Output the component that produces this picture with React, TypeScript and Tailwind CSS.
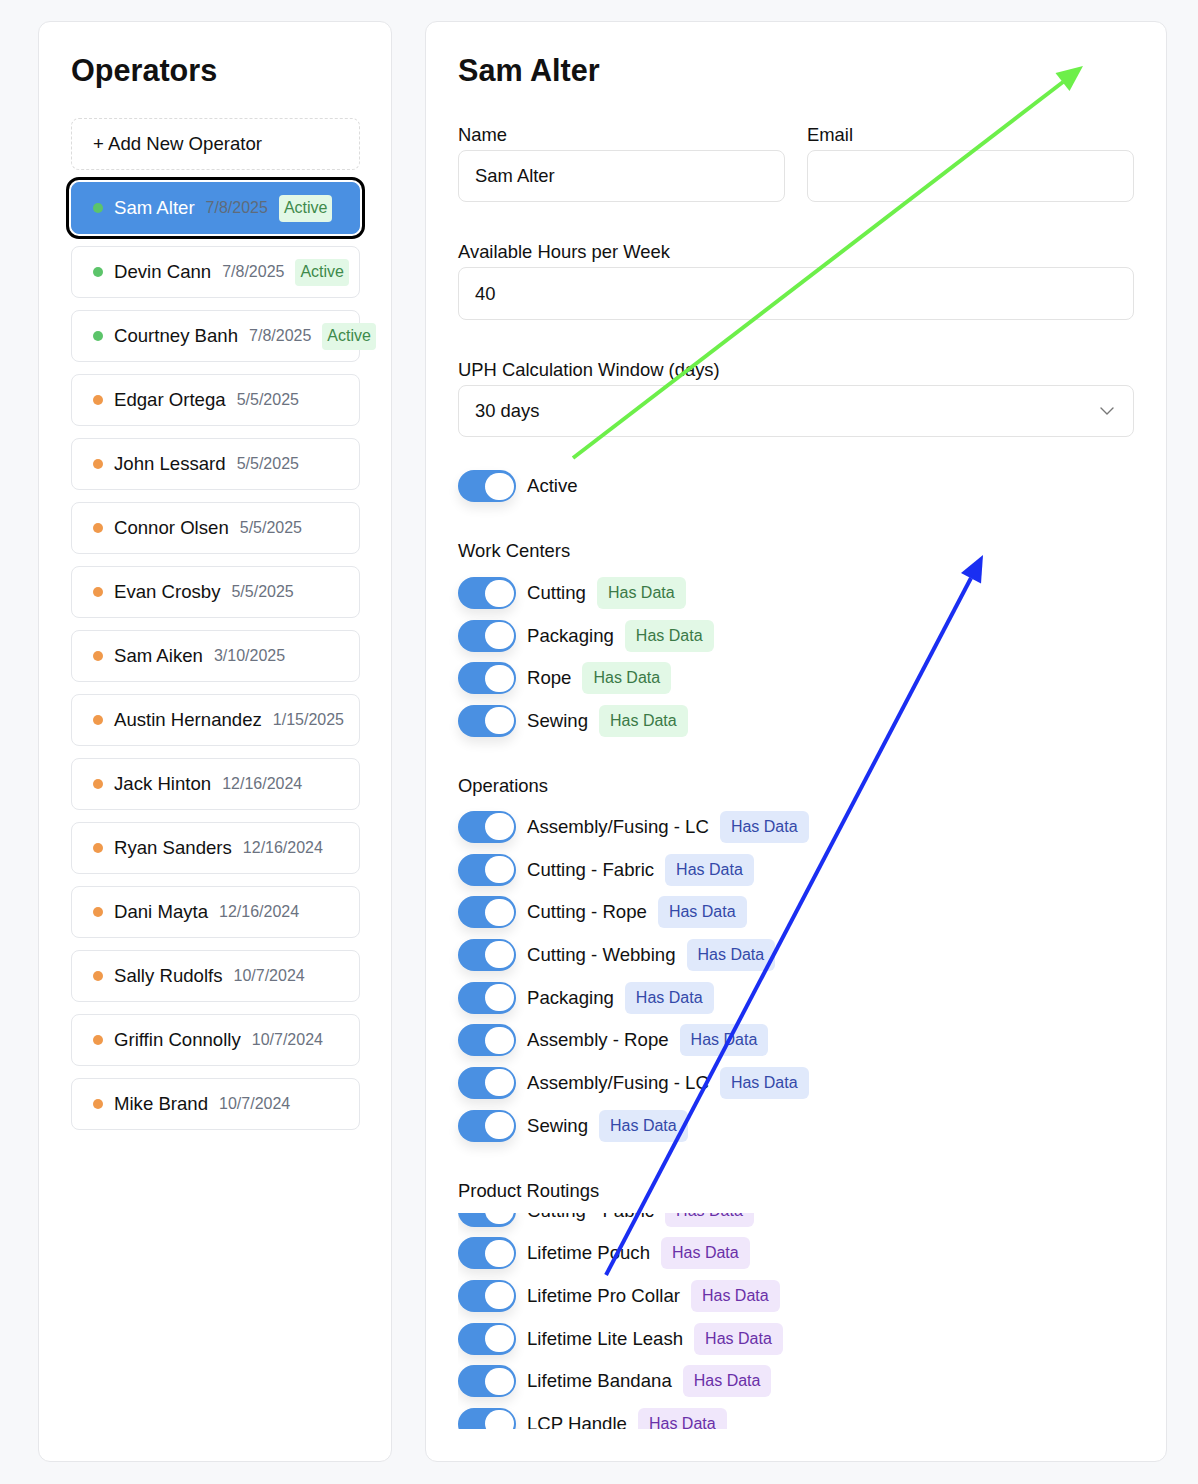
import React from 'react';
import { ChevronDown } from 'lucide-react';

type Operator = { name: string; date: string; active?: boolean };

const OPERATORS: Operator[] = [
  { name: 'Sam Alter', date: '7/8/2025', active: true },
  { name: 'Devin Cann', date: '7/8/2025', active: true },
  { name: 'Courtney Banh', date: '7/8/2025', active: true },
  { name: 'Edgar Ortega', date: '5/5/2025' },
  { name: 'John Lessard', date: '5/5/2025' },
  { name: 'Connor Olsen', date: '5/5/2025' },
  { name: 'Evan Crosby', date: '5/5/2025' },
  { name: 'Sam Aiken', date: '3/10/2025' },
  { name: 'Austin Hernandez', date: '1/15/2025' },
  { name: 'Jack Hinton', date: '12/16/2024' },
  { name: 'Ryan Sanders', date: '12/16/2024' },
  { name: 'Dani Mayta', date: '12/16/2024' },
  { name: 'Sally Rudolfs', date: '10/7/2024' },
  { name: 'Griffin Connolly', date: '10/7/2024' },
  { name: 'Mike Brand', date: '10/7/2024' },
];

const WORK_CENTERS = ['Cutting', 'Packaging', 'Rope', 'Sewing'];

const OPERATIONS = [
  'Assembly/Fusing - LC',
  'Cutting - Fabric',
  'Cutting - Rope',
  'Cutting - Webbing',
  'Packaging',
  'Assembly - Rope',
  'Assembly/Fusing - LC',
  'Sewing',
];

const ROUTINGS = [
  'Lifetime Leash',
  'Lifetime Collar',
  'Cutting - Fabric',
  'Lifetime Pouch',
  'Lifetime Pro Collar',
  'Lifetime Lite Leash',
  'Lifetime Bandana',
  'LCP Handle',
];

const BADGE = {
  green: 'bg-[#e2f8e6] text-[#3b7a47]',
  blue: 'bg-[#e0e9fb] text-[#3449a9]',
  purple: 'bg-[#f0e7fb] text-[#6a30a8]',
};

const Toggle = () => (
  <span className="flex h-8 w-[58px] shrink-0 items-center justify-end rounded-full bg-[#4a90e2] pr-[2px] shadow-[0_6px_12px_rgba(0,0,0,0.09)]">
    <span className="h-[27px] w-[29px] rounded-full bg-white" />
  </span>
);

const ToggleRow = ({ label, tone }: { label: string; tone: keyof typeof BADGE }) => (
  <div className="flex h-8 items-center gap-[11px] whitespace-nowrap">
    <Toggle />
    <span className="text-[18.6px] text-[#111]">{label}</span>
    <span className={`flex h-8 items-center rounded-md px-[11px] text-[16px] ${BADGE[tone]}`}>Has Data</span>
  </div>
);

const Label = ({ children }: { children: React.ReactNode }) => (
  <div className="mb-[2px] pt-[2px] text-[18.4px] leading-[27px] text-[#111]">{children}</div>
);

const OperatorItem = ({ op, selected }: { op: Operator; selected?: boolean }) => (
  <div
    className={`flex h-[52px] w-[289px] shrink-0 items-center gap-[11px] whitespace-nowrap rounded-lg border pl-[21px] ${
      selected
        ? 'border-[#4a90e2] bg-[#4a90e2] outline-[3px] outline-offset-[2px] outline-black outline-solid'
        : 'border-[#e5e7eb] bg-white'
    }`}
  >
    <span className={`h-2.5 w-2.5 shrink-0 rounded-full ${op.active ? 'bg-[#5cc46a]' : 'bg-[#f0994b]'}`} />
    <span className={`text-[18.6px] ${selected ? 'text-white' : 'text-[#111]'}`}>{op.name}</span>
    <span className={`text-[16px] ${selected ? 'text-[#5f6b7a]' : 'text-[#6b7280]'}`}>{op.date}</span>
    {op.active && (
      <span className="flex h-[27px] shrink-0 items-center rounded px-[5px] text-[16px] bg-[#e2f8e6] text-[#3e8a4b]">Active</span>
    )}
  </div>
);

const Arrows = () => (
  <svg className="pointer-events-none absolute left-0 top-0" width="1198" height="1484" viewBox="0 0 1198 1484">
    <line x1="573" y1="458" x2="1063" y2="82" stroke="#6def4a" strokeWidth="4" />
    <polygon points="1083,66 1069.5,91 1055.5,73" fill="#6def4a" />
    <line x1="606" y1="1275" x2="971" y2="578" stroke="#1a2ef2" strokeWidth="4" />
    <polygon points="983,555 981,583.5 961,573" fill="#1a2ef2" />
  </svg>
);

export default function App() {
  return (
    <div className="relative flex h-[1484px] gap-[33px] bg-[#f7f8fa] pl-[38px] pr-[31px] pt-[21px] font-['Liberation_Sans',Arial,sans-serif] text-[#111]">
      {/* operator list */}
      <div className="flex h-[1441px] w-[354px] shrink-0 flex-col rounded-xl border border-[#e6e7ea] bg-white p-8">
        <h1 className="-mt-[2px] mb-[30px] text-[30.6px] leading-9 font-bold">Operators</h1>
        <div className="flex flex-col gap-3">
          <div className="flex h-[52px] w-[289px] items-center rounded-lg border border-dashed border-[#dcdcdc] pl-[21px] text-[18.6px]">
            + Add New Operator
          </div>
          {OPERATORS.map((op, i) => (
            <OperatorItem key={op.name} op={op} selected={i === 0} />
          ))}
        </div>
      </div>

      {/* detail */}
      <div className="flex h-[1441px] flex-1 flex-col rounded-xl border border-[#e6e7ea] bg-white p-8">
        <h1 className="-mt-[2px] mb-[31px] text-[30.6px] leading-9 font-bold">Sam Alter</h1>

        <div className="grid grid-cols-2 gap-[22px]">
          <div>
            <Label>Name</Label>
            <div className="flex h-[52px] items-center rounded-lg border border-[#e3e3e3] px-4 text-[18.4px]">Sam Alter</div>
          </div>
          <div>
            <Label>Email</Label>
            <div className="h-[52px] rounded-lg border border-[#e3e3e3]" />
          </div>
        </div>

        <div className="mt-[34px]">
          <Label>Available Hours per Week</Label>
          <div className="flex h-[53px] items-center rounded-lg border border-[#e3e3e3] px-4 text-[18.4px]">40</div>
        </div>

        <div className="mt-[34px]">
          <Label>UPH Calculation Window (days)</Label>
          <div className="flex h-[52px] items-center justify-between rounded-lg border border-[#e3e3e3] pl-4 pr-[14px] text-[18.4px]">
            <span>30 days</span>
            <ChevronDown size={24} strokeWidth={1.4} className="text-[#777]" />
          </div>
        </div>

        <div className="mt-[33px] flex h-8 items-center gap-[11px]">
          <Toggle />
          <span className="text-[18.6px]">Active</span>
        </div>

        <div className="mt-[34px]">
          <div className="mb-[13px] pt-[1px] text-[18.4px] leading-[27px]">Work Centers</div>
          <div className="flex flex-col gap-[10.67px]">
            {WORK_CENTERS.map(w => (
              <ToggleRow key={w} label={w} tone="green" />
            ))}
          </div>
        </div>

        <div className="mt-[34px]">
          <div className="mb-[12px] pt-[1px] text-[18.4px] leading-[27px]">Operations</div>
          <div className="flex flex-col gap-[10.67px]">
            {OPERATIONS.map((o, i) => (
              <ToggleRow key={o + i} label={o} tone="blue" />
            ))}
          </div>
        </div>

        <div className="mt-[34px]">
          <div className="mb-[9px] pt-[1px] text-[18.4px] leading-[27px]">Product Routings</div>
          <div className="h-[216px] overflow-hidden">
            <div className="-mt-[103.33px] flex flex-col gap-[10.67px]">
              {ROUTINGS.map(r => (
                <ToggleRow key={r} label={r} tone="purple" />
              ))}
            </div>
          </div>
        </div>
      </div>

      <Arrows />
    </div>
  );
}
